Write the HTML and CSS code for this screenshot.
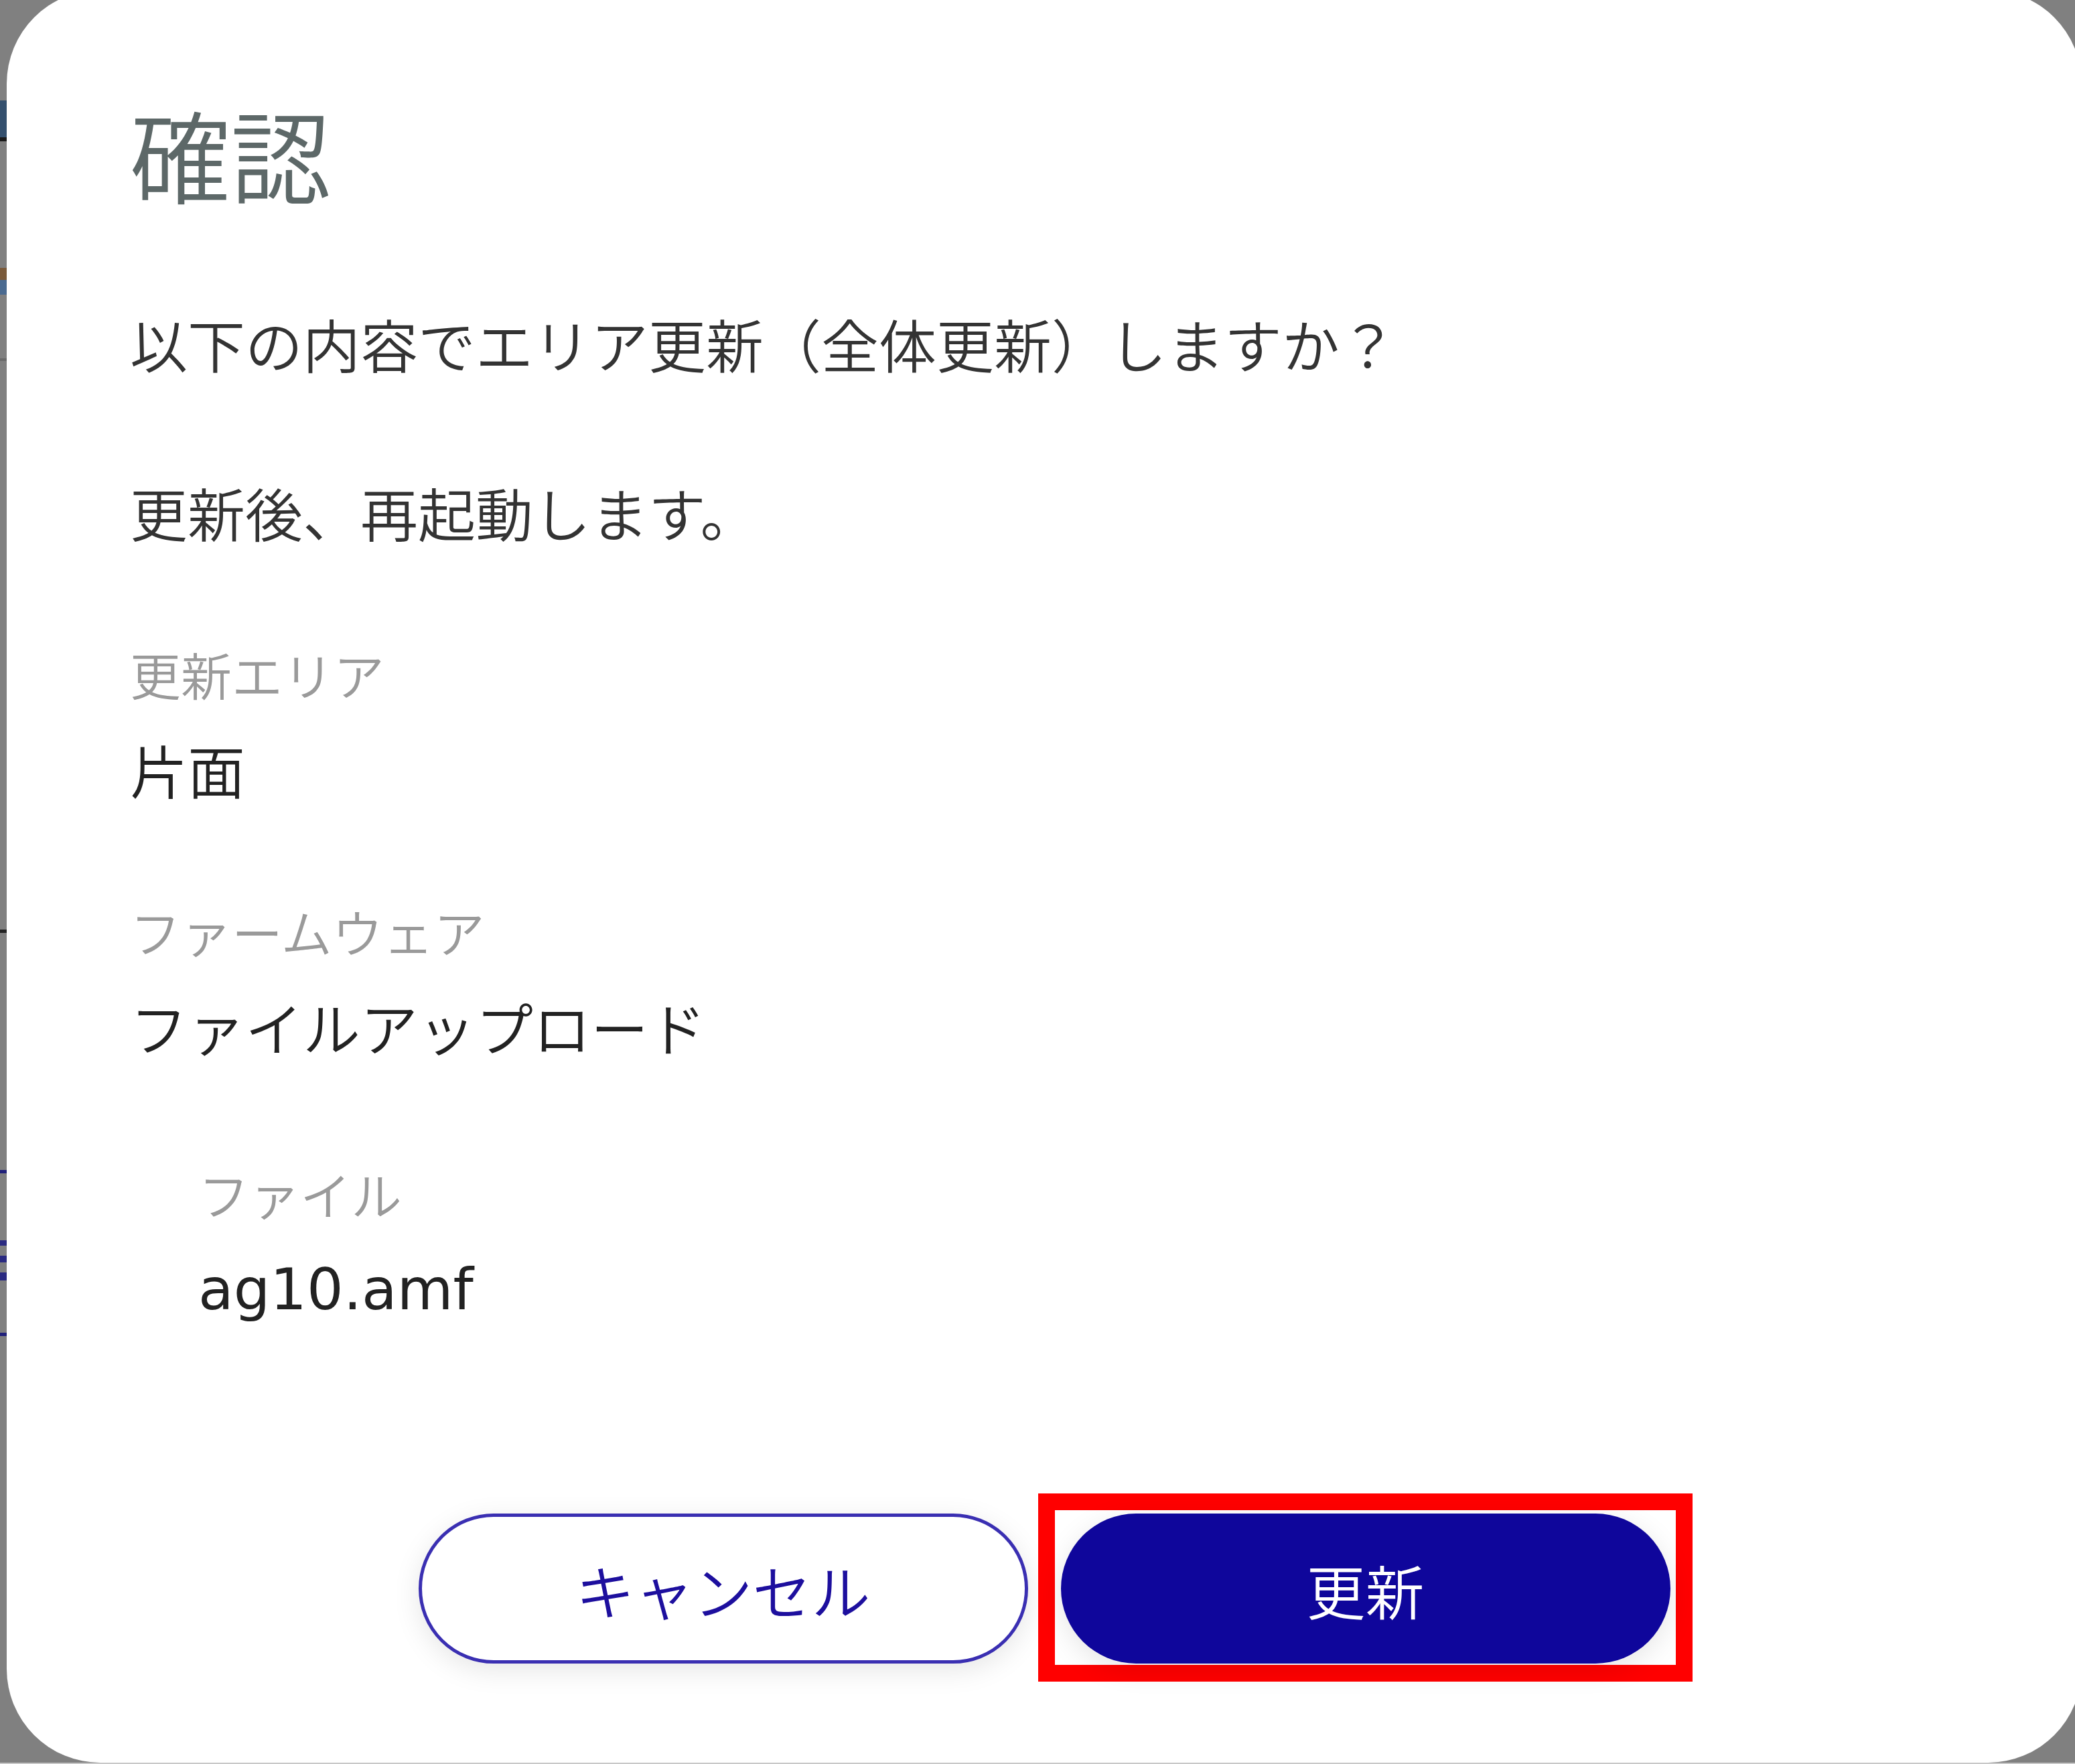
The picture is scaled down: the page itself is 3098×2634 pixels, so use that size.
FILE: index.html
```html
<!DOCTYPE html>
<html lang="ja">
<head>
  <meta charset="UTF-8" />
  <meta name="viewport" content="width=device-width, initial-scale=1.0"/>
  <title>確認</title>
  <link rel="stylesheet" href="styles.css">
</head>
<body>

  <div class="screen">
    <!-- 後ろの画面（オーバーレイで暗くなっている） -->
    <div class="under"></div>

    <!-- 確認ダイアログ -->
    <div class="dialog">
      <h1 class="dialog-title">確認</h1>

      <p class="message first">以下の内容でエリア更新（全体更新）しますか？</p>
      <p class="message">更新後、再起動します。</p>

      <div class="field">
        <div class="field-label">更新エリア</div>
        <div class="field-value">片面</div>
      </div>

      <div class="field">
        <div class="field-label">ファームウェア</div>
        <div class="field-value">ファイルアップロード</div>

        <div class="field sub">
          <div class="field-label">ファイル</div>
          <div class="field-value file-name">ag10.amf</div>
        </div>
      </div>

      <div class="dialog-buttons">
        <button class="btn btn-cancel">キャンセル</button>
        <div class="highlight">
          <button class="btn btn-ok">更新</button>
        </div>
      </div>
    </div>
  </div>

</body>
</html>
```

FILE: styles.css
```css
body {
  margin: 0;
  padding: 0;
  font-family: "Noto Sans CJK JP", "Noto Sans", sans-serif;
  font-weight: 350;
  background: #808080;
}

.screen {
  display: flex;
  height: 2634px;
  box-sizing: border-box;
  border-bottom: 2px solid #c8c8c8;
  overflow: hidden;
  background: #808080;
}

.under {
  flex: none;
  width: 10px;
  background: linear-gradient(to bottom,
    #808080 0 150px,
    #34506e 150px 205px,
    #1a1a1a 205px 211px,
    #808080 211px 400px,
    #7a5a3a 400px 418px,
    #4a6a90 418px 440px,
    #808080 440px 535px,
    #6a6a6a 535px 539px,
    #808080 539px 1388px,
    #222222 1388px 1393px,
    #808080 1393px 1747px,
    #20207a 1747px 1752px,
    #808080 1752px 1852px,
    #2a2a80 1852px 1860px,
    #808080 1860px 1875px,
    #2a2a80 1875px 1885px,
    #808080 1885px 1900px,
    #2a2a80 1900px 1912px,
    #808080 1912px 1990px,
    #20207a 1990px 1995px,
    #808080 1995px);
}

.dialog {
  flex: none;
  width: 3098px;
  height: 2647px;
  margin-top: -15px;
  padding: 168px 184px 0;
  box-sizing: border-box;
  background: #fff;
  border-radius: 140px;
}

.dialog-title {
  margin: 0;
  font-size: 150px;
  line-height: 1;
  font-weight: 350;
  color: #5d6868;
}

.message {
  margin: 166px 0 0;
  font-size: 86px;
  line-height: 1;
  color: #333;
}

.message.first {
  margin-top: 167px;
}

.field {
  margin-top: 160px;
}

.field.sub {
  margin-top: 168px;
  margin-left: 102px;
}

.field-label {
  font-size: 76px;
  line-height: 1;
  color: #9a9a9a;
}

.field-value {
  margin-top: 62px;
  font-size: 86px;
  line-height: 1;
  color: #222;
}

.field-value.file-name {
  margin-top: 62px;
  font-family: "DejaVu Sans", sans-serif;
  font-weight: 400;
}

/* ボタン */
.dialog-buttons {
  display: flex;
  justify-content: center;
  gap: 49px;
  margin-top: 292px;
}

.btn {
  width: 910px;
  height: 224px;
  border-radius: 112px;
  font-family: inherit;
  font-weight: 350;
  font-size: 88px;
  cursor: pointer;
  box-shadow: 0 10px 40px rgba(0,0,0,0.10);
}

.btn-cancel {
  border: 5px solid #3a2fb2;
  background: #fff;
  color: #1d0f9e;
}

.btn-ok {
  border: none;
  background: #0f069b;
  color: #fff;
}

.highlight {
  display: flex;
  border: 25px solid #ff0000;
  padding: 5px 8px 2px 9px;
  margin: -30px -33px -27px -34px;
}
```
